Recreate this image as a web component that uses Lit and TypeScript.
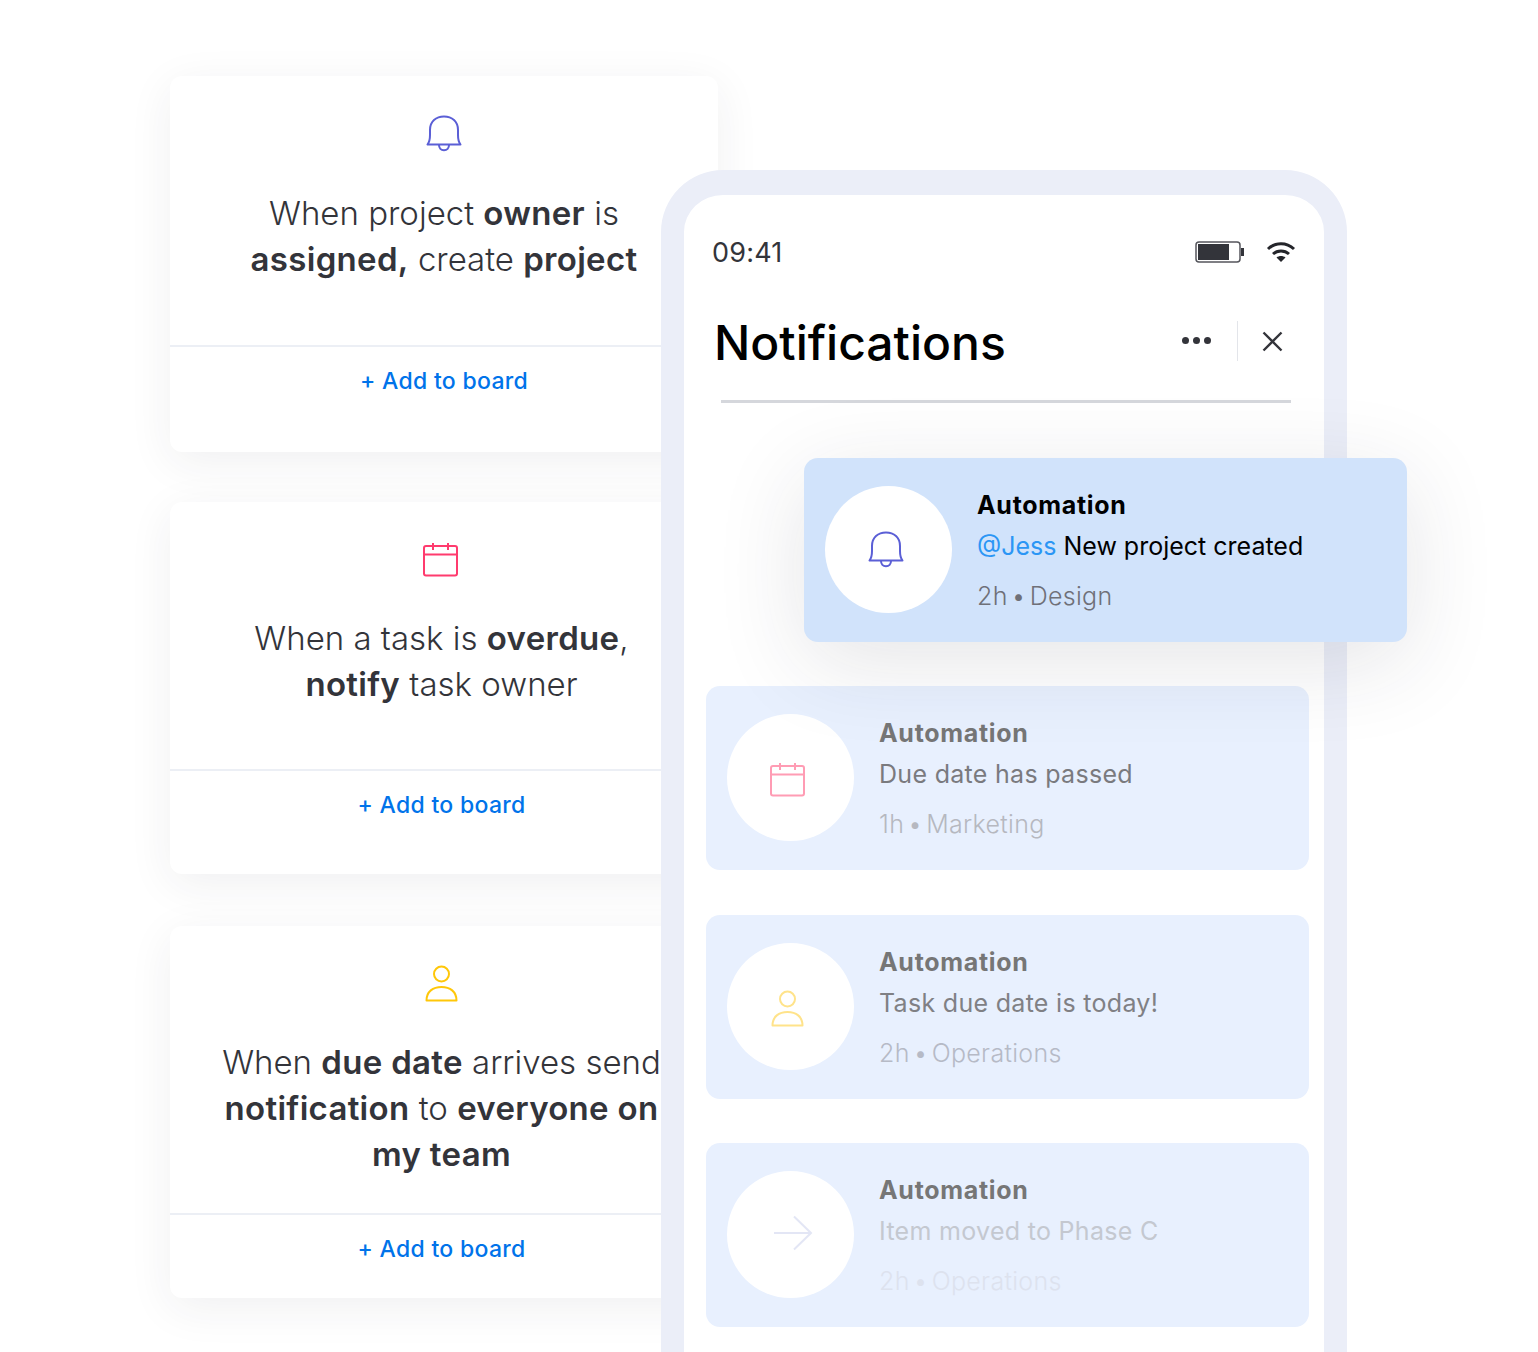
import { LitElement, html, css } from 'lit';
import { customElement } from 'lit/decorators.js';

const bell = (color: string) => html`<svg class="ico" width="36" height="38" viewBox="0 0 36 38" fill="none" stroke=${color} stroke-width="2" stroke-linejoin="round">
  <path d="M1.5 29.5H34.5C32.5 27 32 24 32 20V15C32 6.5 26 1.5 18 1.5C10 1.5 4 6.5 4 15V20C4 24 3.5 27 1.5 29.5Z"/>
  <path d="M13 30C13 33 15 35.2 18 35.2C21 35.2 23 33 23 30"/>
</svg>`;

const calendar = (color: string) => html`<svg class="ico" width="36" height="36" viewBox="0 0 36 36" fill="none" stroke=${color} stroke-width="2">
  <rect x="1" y="4" width="33" height="29.5" rx="2"/>
  <path d="M1 12.5H34M10 1V8M25 1V8"/>
</svg>`;

const person = (color: string) => html`<svg class="ico" width="34" height="38" viewBox="0 0 34 38" fill="none" stroke=${color} stroke-width="2">
  <circle cx="16.5" cy="9" r="7.5"/>
  <path d="M1.5 35.5C1.5 26.5 8 22 16.5 22C25 22 31.5 26.5 31.5 35.5Z" stroke-linejoin="round"/>
</svg>`;

const arrow = (color: string) => html`<svg class="ico" width="40" height="36" viewBox="0 0 40 36" fill="none" stroke=${color} stroke-width="2">
  <path d="M1 18H38M21 1.5L38 18L21 34.5"/>
</svg>`;

@customElement('app-root')
export class AppRoot extends LitElement {
  static styles = css`
    :host {
      display: block;
      position: relative;
      height: 1352px;
      overflow: hidden;
      background: #fff;
      font-family: Inter, "Liberation Sans", sans-serif;
    }
    .cards {
      display: flex;
      flex-direction: column;
      align-items: flex-start;
      gap: 50px;
      padding: 76px 0 0 170px;
    }
    .card {
      display: flex;
      flex-direction: column;
      background: #fff;
      border-radius: 12px;
      box-shadow: 0 10px 45px rgba(40, 40, 60, 0.07);
      color: #33343a;
    }
    .c1 { width: 548px; height: 376px; }
    .c2 { width: 543px; height: 372px; }
    .c3 { width: 543px; height: 372px; margin-top: 2px; }
    .c1 .head { height: 271px; }
    .c2 .head { height: 269px; }
    .c3 .head { height: 289px; }
    .c2 .icon { margin-right: 2px; }
    .head {
      display: flex;
      flex-direction: column;
      align-items: center;
      padding-top: 39px;
      box-sizing: border-box;
      border-bottom: 2px solid #eceff5;
    }
    .head .icon { height: 38px; display: flex; align-items: center; }
    .c1 .text { margin-top: 37px; }
    .text {
      margin-top: 36px;
      font-size: 33px;
      line-height: 46px;
      font-weight: 300;
      text-align: center;
      white-space: nowrap;
    }
    .text b { font-weight: 600; letter-spacing: 0.3px; }
    .add {
      margin-top: 20px;
      text-align: center;
      font-size: 23px;
      line-height: 28px;
      font-weight: 500;
      color: #0073ea;
      letter-spacing: 0.3px;
    }
    .phone {
      position: absolute;
      left: 661px;
      top: 170px;
      width: 686px;
      height: 1300px;
      box-sizing: border-box;
      border: solid #ebeef8;
      border-width: 25px 23px;
      border-radius: 62px;
      background: #fff;
    }
    .status {
      display: flex;
      align-items: center;
      justify-content: space-between;
      padding: 37px 28px 0 28px;
      height: 40px;
      font-size: 27px;
      letter-spacing: 0.2px;
      color: #33343a;
    }
    .sicons { display: flex; align-items: center; gap: 21px; }
    .top {
      display: flex;
      align-items: center;
      padding: 43px 41px 0 30px;
      height: 56px;
    }
    h1 {
      margin: 0;
      flex: 1;
      font-size: 48px;
      line-height: 56px;
      font-weight: 500;
      color: #000;
    }
    .dots { display: flex; gap: 4px; margin-bottom: 6px; }
    .dots span { width: 7px; height: 7px; border-radius: 50%; background: #33343a; }
    .sep { width: 1px; height: 40px; margin: 0 24px 4px 26px; background: #e3e5ea; }
    .close { margin-bottom: 4px; }
    .rule { height: 3px; margin: 29px 33px 0 37px; background: #d5d7dc; }
    .list {
      display: flex;
      flex-direction: column;
      gap: 44.5px;
      padding: 283px 15px 0 22px;
    }
    .note {
      display: flex;
      align-items: flex-start;
      gap: 25px;
      height: 184px;
      box-sizing: border-box;
      padding: 28px 21px;
      border-radius: 14px;
      background: #e8f0fe;
    }
    .hl {
      position: absolute;
      left: 120px;
      top: 263px;
      width: 603px;
      background: #d1e3fb;
      box-shadow: 0 20px 90px rgba(40, 40, 60, 0.12);
    }
    .disc {
      flex: none;
      box-sizing: border-box;
      width: 127px;
      height: 127px;
      padding-right: 6px;
      border-radius: 50%;
      background: #fff;
      display: flex;
      align-items: center;
      justify-content: center;
    }
    .r0 .disc { padding-top: 4px; }
    .r1 .disc { padding-top: 6px; }
    .r2 .disc { padding-right: 0; padding-left: 4px; padding-bottom: 4px; }
    .title { margin-top: -1px; font-size: 25px; line-height: 40px; font-weight: 700; letter-spacing: 0.7px; }
    .msg { margin-top: 1px; font-size: 25px; line-height: 40px; font-weight: 400; letter-spacing: 0.3px; }
    .hl .msg { letter-spacing: 0; }
    .meta { margin-top: 10px; font-size: 25px; line-height: 40px; font-weight: 300; letter-spacing: 0.3px; word-spacing: -3.5px; }
    .msg em { font-style: normal; color: #2b96f5; }
    .ico { display: block; }
  `;

  rows = [
    { icon: calendar('#ff9cb4'), msg: 'Due date has passed', meta: '1h • Marketing', t: '#767676', m: '#7a7a7e', s: '#b6b8c0' },
    { icon: person('#ffe38a'), msg: 'Task due date is today!', meta: '2h • Operations', t: '#767676', m: '#808084', s: '#b6bac6' },
    { icon: arrow('#e3e6f5'), msg: 'Item moved to Phase C', meta: '2h • Operations', t: '#767676', m: '#c4c8d0', s: '#dde2ee' },
  ];

  render() {
    return html`
      <div class="cards">
        <div class="card c1">
          <div class="head">
            <div class="icon">${bell('#5b5fd6')}</div>
            <div class="text">When project <b>owner</b> is<br /><b>assigned,</b> create <b>project</b></div>
          </div>
          <div class="add">+ Add to board</div>
        </div>
        <div class="card c2">
          <div class="head">
            <div class="icon">${calendar('#ff3b6e')}</div>
            <div class="text">When a task is <b>overdue</b>,<br /><b>notify</b> task owner</div>
          </div>
          <div class="add">+ Add to board</div>
        </div>
        <div class="card c3">
          <div class="head">
            <div class="icon">${person('#ffc709')}</div>
            <div class="text">When <b>due date</b> arrives send<br /><b>notification</b> to <b>everyone on</b><br /><b>my team</b></div>
          </div>
          <div class="add">+ Add to board</div>
        </div>
      </div>

      <div class="phone">
        <div class="status">
          <span>09:41</span>
          <div class="sicons">
            <svg width="50" height="22" viewBox="0 0 50 22" fill="none">
              <rect x="1" y="1" width="44" height="20" rx="3" stroke="#55565c" stroke-width="1.5"/>
              <rect x="3" y="3" width="31" height="16" fill="#33343a"/>
              <rect x="46" y="7" width="3" height="8" fill="#33343a"/>
            </svg>
            <svg width="30" height="22" viewBox="0 0 30 22" fill="none" stroke="#24252a" stroke-width="3">
              <path d="M2 8C9.5 1 20.5 1 28 8"/>
              <path d="M7 13C11.5 9 18.5 9 23 13"/>
              <path d="M15 21L10.5 16.5C13 14.5 17 14.5 19.5 16.5Z" fill="#24252a" stroke="none"/>
            </svg>
          </div>
        </div>
        <div class="top">
          <h1>Notifications</h1>
          <div class="dots"><span></span><span></span><span></span></div>
          <div class="sep"></div>
          <svg class="close" width="21" height="21" viewBox="0 0 21 21" fill="none" stroke="#33343a" stroke-width="2.4">
            <path d="M1.5 1.5L19.5 19.5M19.5 1.5L1.5 19.5"/>
          </svg>
        </div>
        <div class="rule"></div>

        <div class="list">
          ${this.rows.map(
            (r, i) => html`
              <div class="note r${i}">
                <div class="disc">${r.icon}</div>
                <div>
                  <div class="title" style="color:${r.t}">Automation</div>
                  <div class="msg" style="color:${r.m}">${r.msg}</div>
                  <div class="meta" style="color:${r.s}">${r.meta}</div>
                </div>
              </div>
            `
          )}
        </div>

        <div class="note hl">
          <div class="disc">${bell('#5b5fd6')}</div>
          <div>
            <div class="title" style="color:#000">Automation</div>
            <div class="msg" style="color:#000"><em>@Jess</em> New project created</div>
            <div class="meta" style="color:#6f7078">2h • Design</div>
          </div>
        </div>
      </div>
    `;
  }
}
